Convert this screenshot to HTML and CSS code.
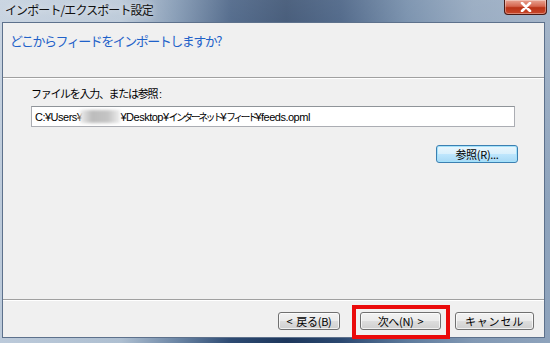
FILE: index.html
```html
<!DOCTYPE html>
<html lang="ja">
<head>
  <meta charset="UTF-8" />
  <title>インポート/エクスポート設定</title>
  <link rel="stylesheet" href="styles.css">
</head>
<body>
  <div class="window">
    <div class="titlebar">
      <span class="title">インポート/エクスポート設定</span>
      <button class="close" aria-label="閉じる">
        <svg width="12" height="10" viewBox="0 0 12 10">
          <path d="M2 1 L10 9 M10 1 L2 9" stroke="#fff" stroke-width="2.6" stroke-linecap="round"/>
        </svg>
      </button>
    </div>

    <div class="client">
      <div class="header">
        <h1>どこからフィードをインポートしますか?</h1>
      </div>

      <div class="content">
        <label class="field-label" for="path">ファイルを入力、または参照<span class="colon">:</span></label>
        <div class="path-box" id="path">
          <span>C:¥Users¥</span><span class="blur"></span><span>¥Desktop¥<span class="jp">インターネット</span>¥<span class="jp">フィード</span>¥feeds.opml</span>
        </div>
        <div class="browse-row">
          <button class="btn btn-default">参照(R)...</button>
        </div>
      </div>

      <div class="footer">
        <button class="btn btn-back"><span class="arrow">&lt;</span>戻る(B)</button>
        <span class="highlight">
          <button class="btn btn-next">次へ(N)<span class="arrow next">&gt;</span></button>
        </span>
        <button class="btn btn-cancel">キャンセル</button>
      </div>
    </div>
  </div>
</body>
</html>
```

FILE: styles.css
```css
body {
  margin: 0;
  font-family: "Noto Sans CJK JP", "Liberation Sans", sans-serif;
  font-size: 11px;
  color: #000;
}
.window {
  width: 550px;
  height: 343px;
  display: flex;
  flex-direction: column;
  overflow: hidden;
  background:
    linear-gradient(180deg, rgba(255,255,255,0.22) 0%, rgba(255,255,255,0) 60%),
    linear-gradient(90deg, #bccada 0%, #aebfd1 22%, #6d87a6 32%, #2d4a72 42%, #1d375c 52%, #2b4870 62%, #5d7a9c 74%, #8299b4 86%, #8ea3bc 100%);
}
.titlebar {
  height: 22px;
  display: flex;
  justify-content: space-between;
  align-items: flex-start;
  flex-shrink: 0;
}
.title {
  padding: 3px 0 0 5px;
  font-size: 12px;
  line-height: 14px;
  letter-spacing: -0.9px;
  color: #111;
  text-shadow: 0 0 6px rgba(255,255,255,0.8);
}
.close {
  width: 43px;
  height: 15px;
  margin-right: 3px;
  padding: 0;
  border: 1px solid #4a1a14;
  border-top: none;
  border-radius: 0 0 4px 4px;
  background: linear-gradient(180deg, #e9a493 0%, #d5664f 45%, #b93317 55%, #c9482b 100%);
  box-shadow: inset 0 0 0 1px rgba(255,255,255,0.35);
  display: flex;
  align-items: center;
  justify-content: center;
}
.client {
  flex: 1;
  margin: 0 5px 5px 2px;
  border: 1px solid #5d718c;
  background: #f0f0f0;
  display: flex;
  flex-direction: column;
}
.header {
  height: 54px;
  border-bottom: 1px solid #a0a0a0;
  box-shadow: 0 1px 0 #fff;
}
.header h1 {
  margin: 0;
  padding: 8px 0 0 7px;
  font-size: 13px;
  line-height: 20px;
  font-weight: normal;
  letter-spacing: -1.5px;
  color: #1f62c9;
}
.content {
  padding: 0 29px 0 28px;
}
.field-label {
  display: block;
  margin-top: 8px;
  line-height: 14px;
  font-size: 11px;
  letter-spacing: -1.3px;
}
.field-label .colon {
  font-family: "Liberation Sans", sans-serif;
  letter-spacing: 0;
  margin-left: 2px;
}
.path-box {
  margin-top: 5px;
  height: 19px;
  border: 1px solid #abadb3;
  border-top-color: #8f9499;
  background: #fff;
  padding-left: 3px;
  display: flex;
  align-items: center;
  font-family: "Liberation Sans", "Noto Sans CJK JP", sans-serif;
  font-size: 11px;
  letter-spacing: -0.5px;
  white-space: nowrap;
}
.path-box .jp {
  font-family: "Noto Sans CJK JP", sans-serif;
  font-size: 10px;
  letter-spacing: -2.6px;
}
.path-box .blur {
  width: 40px;
  height: 13px;
  margin-left: -2px;
  background: linear-gradient(90deg, #eee, #bcbcbc 30%, #c4c4c4 70%, #eee);
  filter: blur(1.5px);
}
.browse-row {
  display: flex;
  justify-content: flex-end;
  margin-top: 18px;
  margin-right: -3px;
}
.btn {
  height: 18px;
  padding: 0;
  border: 1px solid #707070;
  border-radius: 3px;
  background: linear-gradient(180deg, #f2f2f2 0%, #ebebeb 48%, #dddddd 52%, #cfcfcf 100%);
  box-shadow: inset 0 0 0 1px rgba(255,255,255,0.7);
  font-family: "Noto Sans CJK JP", "Liberation Sans", sans-serif;
  font-size: 11px;
  line-height: 14px;
  letter-spacing: -0.3px;
  color: #000;
}
.btn .arrow {
  margin-right: 4px;
}
.btn .arrow.next {
  margin: 0 0 0 4px;
}
.btn-default {
  width: 82px;
  border-color: #3c7fb1;
  background: linear-gradient(180deg, #eaf6fd 0%, #d9f0fc 48%, #bee6fd 52%, #a7d9f5 100%);
  box-shadow: inset 0 0 0 1px #a3e2fb;
}
.footer {
  margin-top: auto;
  height: 38px;
  border-top: 1px solid #a0a0a0;
  box-shadow: inset 0 1px 0 #fff;
  display: flex;
  align-items: flex-start;
  justify-content: flex-end;
  padding: 12px 10px 0 0;
  box-sizing: border-box;
}
.btn-back {
  width: 62px;
}
.highlight {
  position: relative;
  margin-left: 20px;
}
.highlight::after {
  content: "";
  position: absolute;
  left: -8px;
  right: -9px;
  top: -7px;
  bottom: -9px;
  border: 4px solid #ea0a0a;
}
.btn-next {
  width: 81px;
  display: block;
}
.btn-cancel {
  width: 79px;
  margin-left: 14px;
  letter-spacing: 0.8px;
}
```
